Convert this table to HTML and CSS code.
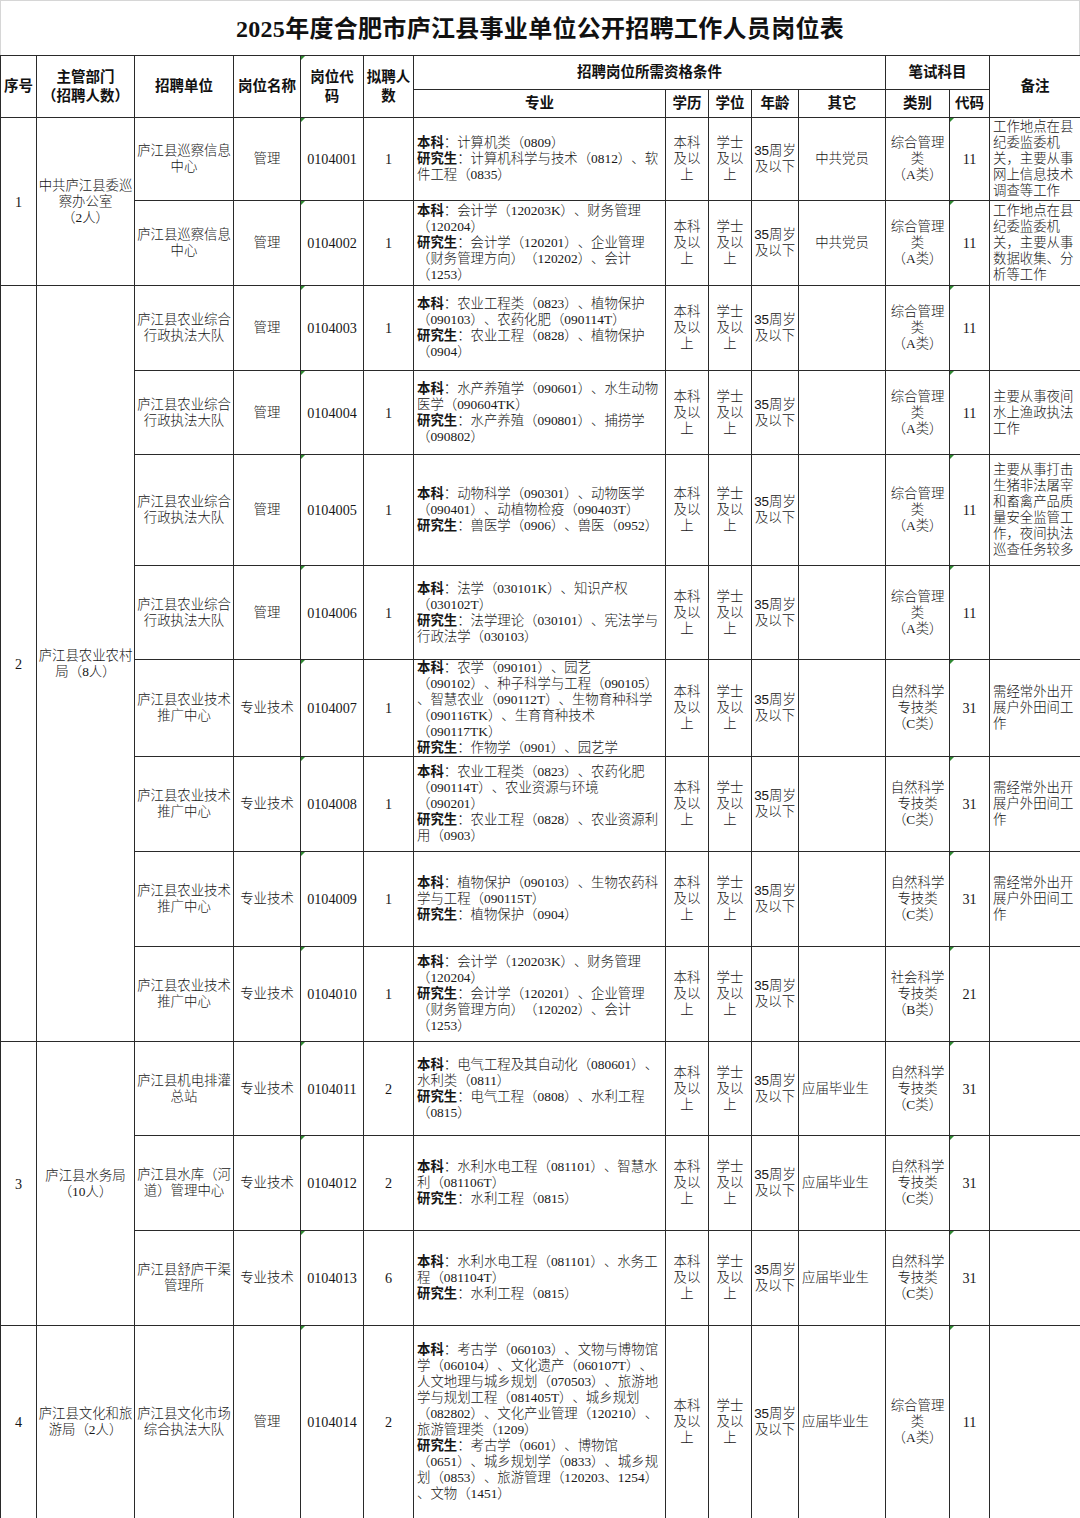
FILE: index.html
```html
<!DOCTYPE html>
<html lang="zh-CN">
<head>
<meta charset="utf-8">
<title>2025年度合肥市庐江县事业单位公开招聘工作人员岗位表</title>
<link rel="stylesheet" href="styles.css">
</head>
<body>
<div class="sheet">
  <div class="title">2025年度合肥市庐江县事业单位公开招聘工作人员岗位表</div>
  <table class="grid">
    <colgroup>
      <col class="c-no"><col class="c-dept"><col class="c-unit"><col class="c-post"><col class="c-code"><col class="c-num">
      <col class="c-major"><col class="c-edu"><col class="c-deg"><col class="c-age"><col class="c-other">
      <col class="c-cat"><col class="c-cc"><col class="c-note">
    </colgroup>
    <thead>
      <tr class="hrow1">
        <th rowspan="2">序号</th>
        <th rowspan="2">主管部门<br>（招聘人数）</th>
        <th rowspan="2">招聘单位</th>
        <th rowspan="2">岗位名称</th>
        <th rowspan="2" class="mark">岗位代<br>码</th>
        <th rowspan="2">拟聘人<br>数</th>
        <th colspan="5">招聘岗位所需资格条件</th>
        <th colspan="2">笔试科目</th>
        <th rowspan="2">备注</th>
      </tr>
      <tr class="hrow2">
        <th>专业</th><th>学历</th><th>学位</th><th>年龄</th><th>其它</th><th>类别</th><th>代码</th>
      </tr>
    </thead>
    <tbody>
      <tr class="h83">
        <td rowspan="2" class="num">1</td>
        <td rowspan="2" class="dept">中共庐江县委巡<br>察办公室<br>（2人）</td>
        <td class="unit">庐江县巡察信息<br>中心</td>
        <td>管理</td>
        <td class="mark num">0104001</td>
        <td class="num">1</td>
        <td class="major"><b>本科</b>：计算机类（0809）<br><b>研究生</b>：计算机科学与技术（0812）、软<br>件工程（0835）</td>
        <td>本科<br>及以<br>上</td>
        <td>学士<br>及以<br>上</td>
        <td class="age"><span class="lat">35</span>周岁<br>及以下</td>
        <td>中共党员</td>
        <td>综合管理<br>类<br>（A类）</td>
        <td class="mark num">11</td>
        <td class="note">工作地点在县<br>纪委监委机<br>关，主要从事<br>网上信息技术<br>调查等工作</td>
      </tr>
      <tr class="h85">
        <td class="unit">庐江县巡察信息<br>中心</td>
        <td>管理</td>
        <td class="mark num">0104002</td>
        <td class="num">1</td>
        <td class="major"><b>本科</b>：会计学（120203K）、财务管理<br>（120204）<br><b>研究生</b>：会计学（120201）、企业管理<br>（财务管理方向）（120202）、会计<br>（1253）</td>
        <td>本科<br>及以<br>上</td>
        <td>学士<br>及以<br>上</td>
        <td class="age"><span class="lat">35</span>周岁<br>及以下</td>
        <td>中共党员</td>
        <td>综合管理<br>类<br>（A类）</td>
        <td class="mark num">11</td>
        <td class="note">工作地点在县<br>纪委监委机<br>关，主要从事<br>数据收集、分<br>析等工作</td>
      </tr>
      <tr class="h85">
        <td rowspan="8" class="num">2</td>
        <td rowspan="8" class="dept">庐江县农业农村<br>局（8人）</td>
        <td class="unit">庐江县农业综合<br>行政执法大队</td>
        <td>管理</td>
        <td class="mark num">0104003</td>
        <td class="num">1</td>
        <td class="major"><b>本科</b>：农业工程类（0823）、植物保护<br>（090103）、农药化肥（090114T）<br><b>研究生</b>：农业工程（0828）、植物保护<br>（0904）</td>
        <td>本科<br>及以<br>上</td>
        <td>学士<br>及以<br>上</td>
        <td class="age"><span class="lat">35</span>周岁<br>及以下</td>
        <td></td>
        <td>综合管理<br>类<br>（A类）</td>
        <td class="mark num">11</td>
        <td class="note"></td>
      </tr>
      <tr class="h84">
        <td class="unit">庐江县农业综合<br>行政执法大队</td>
        <td>管理</td>
        <td class="mark num">0104004</td>
        <td class="num">1</td>
        <td class="major"><b>本科</b>：水产养殖学（090601）、水生动物<br>医学（090604TK）<br><b>研究生</b>：水产养殖（090801）、捕捞学<br>（090802）</td>
        <td>本科<br>及以<br>上</td>
        <td>学士<br>及以<br>上</td>
        <td class="age"><span class="lat">35</span>周岁<br>及以下</td>
        <td></td>
        <td>综合管理<br>类<br>（A类）</td>
        <td class="mark num">11</td>
        <td class="note">主要从事夜间<br>水上渔政执法<br>工作</td>
      </tr>
      <tr class="h111">
        <td class="unit">庐江县农业综合<br>行政执法大队</td>
        <td>管理</td>
        <td class="mark num">0104005</td>
        <td class="num">1</td>
        <td class="major"><b>本科</b>：动物科学（090301）、动物医学<br>（090401）、动植物检疫（090403T）<br><b>研究生</b>：兽医学（0906）、兽医（0952）</td>
        <td>本科<br>及以<br>上</td>
        <td>学士<br>及以<br>上</td>
        <td class="age"><span class="lat">35</span>周岁<br>及以下</td>
        <td></td>
        <td>综合管理<br>类<br>（A类）</td>
        <td class="mark num">11</td>
        <td class="note">主要从事打击<br>生猪非法屠宰<br>和畜禽产品质<br>量安全监管工<br>作，夜间执法<br>巡查任务较多</td>
      </tr>
      <tr class="h94">
        <td class="unit">庐江县农业综合<br>行政执法大队</td>
        <td>管理</td>
        <td class="mark num">0104006</td>
        <td class="num">1</td>
        <td class="major"><b>本科</b>：法学（030101K）、知识产权<br>（030102T）<br><b>研究生</b>：法学理论（030101）、宪法学与<br>行政法学（030103）</td>
        <td>本科<br>及以<br>上</td>
        <td>学士<br>及以<br>上</td>
        <td class="age"><span class="lat">35</span>周岁<br>及以下</td>
        <td></td>
        <td>综合管理<br>类<br>（A类）</td>
        <td class="mark num">11</td>
        <td class="note"></td>
      </tr>
      <tr class="h96">
        <td class="unit">庐江县农业技术<br>推广中心</td>
        <td>专业技术</td>
        <td class="mark num">0104007</td>
        <td class="num">1</td>
        <td class="major"><b>本科</b>：农学（090101）、园艺<br>（090102）、种子科学与工程（090105）<br>、智慧农业（090112T）、生物育种科学<br>（090116TK）、生育育种技术<br>（090117TK）<br><b>研究生</b>：作物学（0901）、园艺学</td>
        <td>本科<br>及以<br>上</td>
        <td>学士<br>及以<br>上</td>
        <td class="age"><span class="lat">35</span>周岁<br>及以下</td>
        <td></td>
        <td>自然科学<br>专技类<br>（C类）</td>
        <td class="mark num">31</td>
        <td class="note">需经常外出开<br>展户外田间工<br>作</td>
      </tr>
      <tr class="h95">
        <td class="unit">庐江县农业技术<br>推广中心</td>
        <td>专业技术</td>
        <td class="mark num">0104008</td>
        <td class="num">1</td>
        <td class="major"><b>本科</b>：农业工程类（0823）、农药化肥<br>（090114T）、农业资源与环境<br>（090201）<br><b>研究生</b>：农业工程（0828）、农业资源利<br>用（0903）</td>
        <td>本科<br>及以<br>上</td>
        <td>学士<br>及以<br>上</td>
        <td class="age"><span class="lat">35</span>周岁<br>及以下</td>
        <td></td>
        <td>自然科学<br>专技类<br>（C类）</td>
        <td class="mark num">31</td>
        <td class="note">需经常外出开<br>展户外田间工<br>作</td>
      </tr>
      <tr class="h95">
        <td class="unit">庐江县农业技术<br>推广中心</td>
        <td>专业技术</td>
        <td class="mark num">0104009</td>
        <td class="num">1</td>
        <td class="major"><b>本科</b>：植物保护（090103）、生物农药科<br>学与工程（090115T）<br><b>研究生</b>：植物保护（0904）</td>
        <td>本科<br>及以<br>上</td>
        <td>学士<br>及以<br>上</td>
        <td class="age"><span class="lat">35</span>周岁<br>及以下</td>
        <td></td>
        <td>自然科学<br>专技类<br>（C类）</td>
        <td class="mark num">31</td>
        <td class="note">需经常外出开<br>展户外田间工<br>作</td>
      </tr>
      <tr class="h95">
        <td class="unit">庐江县农业技术<br>推广中心</td>
        <td>专业技术</td>
        <td class="mark num">0104010</td>
        <td class="num">1</td>
        <td class="major"><b>本科</b>：会计学（120203K）、财务管理<br>（120204）<br><b>研究生</b>：会计学（120201）、企业管理<br>（财务管理方向）（120202）、会计<br>（1253）</td>
        <td>本科<br>及以<br>上</td>
        <td>学士<br>及以<br>上</td>
        <td class="age"><span class="lat">35</span>周岁<br>及以下</td>
        <td></td>
        <td>社会科学<br>专技类<br>（B类）</td>
        <td class="mark num">21</td>
        <td class="note"></td>
      </tr>
      <tr class="h94">
        <td rowspan="3" class="num">3</td>
        <td rowspan="3" class="dept">庐江县水务局<br>（10人）</td>
        <td class="unit">庐江县机电排灌<br>总站</td>
        <td>专业技术</td>
        <td class="mark num">0104011</td>
        <td class="num">2</td>
        <td class="major"><b>本科</b>：电气工程及其自动化（080601）、<br>水利类（0811）<br><b>研究生</b>：电气工程（0808）、水利工程<br>（0815）</td>
        <td>本科<br>及以<br>上</td>
        <td>学士<br>及以<br>上</td>
        <td class="age"><span class="lat">35</span>周岁<br>及以下</td>
        <td class="other">应届毕业生</td>
        <td>自然科学<br>专技类<br>（C类）</td>
        <td class="mark num">31</td>
        <td class="note"></td>
      </tr>
      <tr class="h95">
        <td class="unit">庐江县水库（河<br>道）管理中心</td>
        <td>专业技术</td>
        <td class="mark num">0104012</td>
        <td class="num">2</td>
        <td class="major"><b>本科</b>：水利水电工程（081101）、智慧水<br>利（081106T）<br><b>研究生</b>：水利工程（0815）</td>
        <td>本科<br>及以<br>上</td>
        <td>学士<br>及以<br>上</td>
        <td class="age"><span class="lat">35</span>周岁<br>及以下</td>
        <td class="other">应届毕业生</td>
        <td>自然科学<br>专技类<br>（C类）</td>
        <td class="mark num">31</td>
        <td class="note"></td>
      </tr>
      <tr class="h95">
        <td class="unit">庐江县舒庐干渠<br>管理所</td>
        <td>专业技术</td>
        <td class="mark num">0104013</td>
        <td class="num">6</td>
        <td class="major"><b>本科</b>：水利水电工程（081101）、水务工<br>程（081104T）<br><b>研究生</b>：水利工程（0815）</td>
        <td>本科<br>及以<br>上</td>
        <td>学士<br>及以<br>上</td>
        <td class="age"><span class="lat">35</span>周岁<br>及以下</td>
        <td class="other">应届毕业生</td>
        <td>自然科学<br>专技类<br>（C类）</td>
        <td class="mark num">31</td>
        <td class="note"></td>
      </tr>
      <tr class="h193">
        <td class="num">4</td>
        <td class="dept">庐江县文化和旅<br>游局（2人）</td>
        <td class="unit">庐江县文化市场<br>综合执法大队</td>
        <td>管理</td>
        <td class="mark num">0104014</td>
        <td class="num">2</td>
        <td class="major"><b>本科</b>：考古学（060103）、文物与博物馆<br>学（060104）、文化遗产（060107T）、<br>人文地理与城乡规划（070503）、旅游地<br>学与规划工程（081405T）、城乡规划<br>（082802）、文化产业管理（120210）、<br>旅游管理类（1209）<br><b>研究生</b>：考古学（0601）、博物馆<br>（0651）、城乡规划学（0833）、城乡规<br>划（0853）、旅游管理（120203、1254）<br>、文物（1451）</td>
        <td>本科<br>及以<br>上</td>
        <td>学士<br>及以<br>上</td>
        <td class="age"><span class="lat">35</span>周岁<br>及以下</td>
        <td class="other">应届毕业生</td>
        <td>综合管理<br>类<br>（A类）</td>
        <td class="mark num">11</td>
        <td class="note"></td>
      </tr>
    </tbody>
  </table>
</div>
</body>
</html>
```

FILE: styles.css
```css
html, body {
  margin: 0;
  padding: 0;
  background: #ffffff;
}

body {
  font-family: "Liberation Serif", "Noto Sans CJK SC", serif;
  color: #1a1a1a;
  text-spacing-trim: space-all;
}

.sheet {
  width: 1080px;
}

.title {
  height: 55px;
  box-sizing: border-box;
  padding-bottom: 4px;
  border-top: 1px solid #d6d6d6;
  border-left: 1px solid #d6d6d6;
  border-right: 1px solid #d6d6d6;
  display: flex;
  align-items: center;
  justify-content: center;
  font-size: 24px;
  font-weight: bold;
  letter-spacing: 0.3px;
  color: #111;
}

.grid {
  border-collapse: collapse;
  table-layout: fixed;
  width: 1080px;
}

.c-no { width: 36px; }
.c-dept { width: 98px; }
.c-unit { width: 99px; }
.c-post { width: 67px; }
.c-code { width: 63px; }
.c-num { width: 50px; }
.c-major { width: 252px; }
.c-edu { width: 43px; }
.c-deg { width: 43px; }
.c-age { width: 47px; }
.c-other { width: 87px; }
.c-cat { width: 64px; }
.c-cc { width: 40px; }
.c-note { width: 91px; }

.grid th,
.grid td {
  border: 1px solid #2a2a2a;
  padding: 0 2px;
  text-align: center;
  vertical-align: middle;
  white-space: nowrap;
  overflow: visible;
}

.grid th {
  font-size: 14.5px;
  line-height: 19px;
  font-weight: bold;
  color: #111;
}

.grid td {
  font-size: 13.4px;
  line-height: 16px;
  font-weight: 300;
  color: #161616;
}

.grid td.num {
  font-size: 14.2px;
}

.hrow1 { height: 34px; }
.hrow2 { height: 28px; }

.h83 { height: 83px; }
.h84 { height: 84px; }
.h85 { height: 85px; }
.h94 { height: 94px; }
.h95 { height: 95px; }
.h96 { height: 96px; }
.h111 { height: 111px; }
.h193 { height: 193px; }

.grid td.dept,
.grid td.unit {
  padding: 0 1px;
}

.grid td.major {
  text-align: left;
  padding: 0 1px 0 3px;
}

.grid td.major b {
  font-weight: bold;
}

.grid td.note {
  text-align: left;
  padding: 0 1px 0 3px;
}

.grid td.other {
  text-align: left;
  padding: 0 3px;
}

.grid td.age {
  padding: 0 1px;
}

.lat {
  font-family: "Liberation Sans", "Noto Sans CJK SC", sans-serif;
}

.grid .mark {
  position: relative;
}

.grid .mark::before {
  content: "";
  position: absolute;
  left: 0;
  top: 0;
  border-top: 4px solid #2f8a32;
  border-right: 4px solid transparent;
}
```
